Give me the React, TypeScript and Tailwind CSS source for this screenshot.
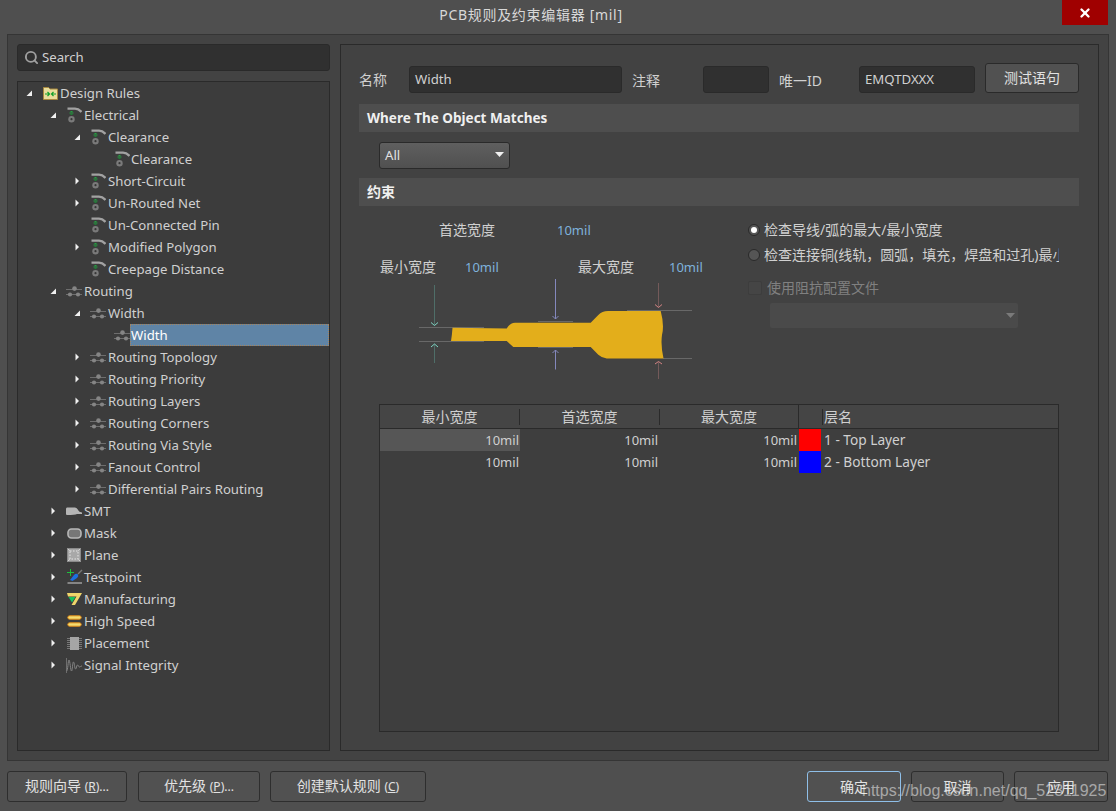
import { Search, X } from 'lucide-react';

type IconName =
  | 'folder' | 'rule' | 'route' | 'smt' | 'mask' | 'plane'
  | 'testpoint' | 'manufacturing' | 'speed' | 'placement' | 'signal';

interface TreeItem {
  label: string;
  level: number;
  icon: IconName;
  arrow?: 'open' | 'closed';
  selected?: boolean;
}

const treeItems: TreeItem[] = [
  { label: 'Design Rules', level: 0, icon: 'folder', arrow: 'open' },
  { label: 'Electrical', level: 1, icon: 'rule', arrow: 'open' },
  { label: 'Clearance', level: 2, icon: 'rule', arrow: 'open' },
  { label: 'Clearance', level: 3, icon: 'rule' },
  { label: 'Short-Circuit', level: 2, icon: 'rule', arrow: 'closed' },
  { label: 'Un-Routed Net', level: 2, icon: 'rule', arrow: 'closed' },
  { label: 'Un-Connected Pin', level: 2, icon: 'rule' },
  { label: 'Modified Polygon', level: 2, icon: 'rule', arrow: 'closed' },
  { label: 'Creepage Distance', level: 2, icon: 'rule' },
  { label: 'Routing', level: 1, icon: 'route', arrow: 'open' },
  { label: 'Width', level: 2, icon: 'route', arrow: 'open' },
  { label: 'Width', level: 3, icon: 'route', selected: true },
  { label: 'Routing Topology', level: 2, icon: 'route', arrow: 'closed' },
  { label: 'Routing Priority', level: 2, icon: 'route', arrow: 'closed' },
  { label: 'Routing Layers', level: 2, icon: 'route', arrow: 'closed' },
  { label: 'Routing Corners', level: 2, icon: 'route', arrow: 'closed' },
  { label: 'Routing Via Style', level: 2, icon: 'route', arrow: 'closed' },
  { label: 'Fanout Control', level: 2, icon: 'route', arrow: 'closed' },
  { label: 'Differential Pairs Routing', level: 2, icon: 'route', arrow: 'closed' },
  { label: 'SMT', level: 1, icon: 'smt', arrow: 'closed' },
  { label: 'Mask', level: 1, icon: 'mask', arrow: 'closed' },
  { label: 'Plane', level: 1, icon: 'plane', arrow: 'closed' },
  { label: 'Testpoint', level: 1, icon: 'testpoint', arrow: 'closed' },
  { label: 'Manufacturing', level: 1, icon: 'manufacturing', arrow: 'closed' },
  { label: 'High Speed', level: 1, icon: 'speed', arrow: 'closed' },
  { label: 'Placement', level: 1, icon: 'placement', arrow: 'closed' },
  { label: 'Signal Integrity', level: 1, icon: 'signal', arrow: 'closed' },
];

const levelPadding = ['pl-[8px]', 'pl-[32px]', 'pl-[56px]', 'pl-[80px]'];

function TreeIcon({ name }: { name: IconName }) {
  switch (name) {
    case 'folder':
      return (
        <svg width="15" height="14" viewBox="0 0 15 14" className="shrink-0">
          <path d="M0.5 1.5H5.5L7 3H14.5V13.5H0.5Z" fill="#e9dd9c" stroke="#a8893f" />
          <path d="M2 8H6M4.5 6L6.5 8L4.5 10M13 8H9M10.5 6L8.5 8L10.5 10" stroke="#12a12c" strokeWidth="1.2" fill="none" />
        </svg>
      );
    case 'rule':
      return (
        <svg width="15" height="16" viewBox="0 0 15 16" className="shrink-0">
          <path d="M0.5 1.6H8Q11.5 1.6 14.5 5" stroke="#a2a2a2" strokeWidth="2.4" fill="none" />
          <rect x="3.5" y="4" width="2" height="1" fill="#22a540" />
          <rect x="2.5" y="5.5" width="4" height="1" fill="#22a540" />
          <rect x="3.5" y="7" width="2" height="1" fill="#1b7f33" />
          <circle cx="4.5" cy="12.2" r="3.2" fill="#7a7a7a" />
          <circle cx="4.5" cy="12.2" r="1.1" fill="#363636" />
        </svg>
      );
    case 'route':
      return (
        <svg width="16" height="11" viewBox="0 0 16 11" className="-ml-[1px] shrink-0">
          <path d="M0 3.5H16M0 8.5H16" stroke="#6e6e6e" />
          <circle cx="8.5" cy="2.6" r="2.3" fill="#858585" />
          <circle cx="4" cy="8.5" r="2.1" fill="#858585" />
          <circle cx="12" cy="8.5" r="2.1" fill="#858585" />
        </svg>
      );
    case 'smt':
      return (
        <svg width="16" height="9" viewBox="0 0 16 9" className="-ml-[1px] shrink-0">
          <path d="M1 0.5H9Q11 0.5 12 3Q13 5 16 5.5V7H11Q9 8 1 8Q0 8 0 7V2Q0 0.5 1 0.5Z" fill="#b5b5b5" />
        </svg>
      );
    case 'mask':
      return (
        <svg width="15" height="11" viewBox="0 0 15 11" className="shrink-0">
          <rect x="1" y="1" width="13" height="9" rx="3.5" fill="#777" stroke="#b8b8b8" strokeWidth="1.6" />
        </svg>
      );
    case 'plane':
      return (
        <svg width="14" height="14" viewBox="0 0 14 14" className="shrink-0">
          <rect width="14" height="14" fill="#a8a8a8" />
          <rect x="3" y="3" width="8" height="8" fill="none" stroke="#e4e4e4" strokeDasharray="1.5 1.5" />
          <path d="M0.5 0.5H13.5V13.5H0.5Z" fill="none" stroke="#8a8a8a" />
          <path d="M1 1L3 3M13 1L11 3M1 13L3 11M13 13L11 11" stroke="#e4e4e4" strokeDasharray="1 1" />
        </svg>
      );
    case 'testpoint':
      return (
        <svg width="16" height="15" viewBox="0 0 16 15" className="-mt-[1px] shrink-0">
          <path d="M0 3.5H7M3.5 0V7" stroke="#1ec03c" />
          <path d="M3 11L7 6Q9 4 11 5.5Q12 7 10 9L5.5 12Z" fill="#1c6fe0" />
          <path d="M11 5L15 1" stroke="#777" strokeWidth="1.4" />
          <path d="M0.5 14H15" stroke="#cfcfcf" />
        </svg>
      );
    case 'manufacturing':
      return (
        <svg width="15" height="12" viewBox="0 0 15 12" className="shrink-0">
          <path d="M0 0H15L8 12H4.5L9.5 3.5H1Z" fill="#efd56a" />
          <path d="M1.5 4H8.5L5 9.5Z" fill="#17c25d" />
        </svg>
      );
    case 'speed':
      return (
        <svg width="15" height="12" viewBox="0 0 15 12" className="shrink-0">
          <rect x="0.8" y="0.8" width="13.4" height="3.4" rx="1.7" fill="#f3dc72" stroke="#e08a16" />
          <rect x="0.8" y="7.8" width="13.4" height="3.4" rx="1.7" fill="#f3dc72" stroke="#e08a16" />
        </svg>
      );
    case 'placement':
      return (
        <svg width="15" height="13" viewBox="0 0 15 13" className="shrink-0">
          <rect x="3" y="0" width="9" height="13" fill="#a5a5a5" />
          <path d="M0 1.5H3M0 3.5H3M0 5.5H3M0 7.5H3M0 9.5H3M0 11.5H3M12 1.5H15M12 3.5H15M12 5.5H15M12 7.5H15M12 9.5H15M12 11.5H15" stroke="#777" />
        </svg>
      );
    case 'signal':
      return (
        <svg width="16" height="15" viewBox="0 0 16 15" className="-ml-[1px] shrink-0">
          <path d="M0.5 0V15" stroke="#6e6e6e" />
          <path d="M0.5 13C2 13 2 2 3 2S4.5 13 5.5 13S6.5 4 7.5 4S8.5 11 9.5 11S10.5 7 11.5 7S12.5 9 13.5 9S14.5 8 16 8" stroke="#858585" fill="none" />
        </svg>
      );
  }
}

function TreeArrow({ kind }: { kind?: 'open' | 'closed' }) {
  if (kind === 'open') {
    return (
      <svg width="7" height="7" viewBox="0 0 7 7">
        <path d="M6 0.5V6H0.5Z" fill="#f0f0f0" />
      </svg>
    );
  }
  if (kind === 'closed') {
    return (
      <svg width="7" height="8" viewBox="0 0 7 8">
        <path d="M1.5 0.5L5 4L1.5 7.5Z" fill="#f0f0f0" />
      </svg>
    );
  }
  return null;
}

function TreeRow({ item }: { item: TreeItem }) {
  return (
    <div className={`flex h-[22px] items-center text-[13.2px] ${levelPadding[item.level]}`}>
      <span className="flex w-[17px] shrink-0 items-center"><TreeArrow kind={item.arrow} /></span>
      <span className="flex w-[15px] shrink-0 items-center justify-start"><TreeIcon name={item.icon} /></span>
      {item.selected ? (
        <span className="flex h-[22px] flex-1 items-center border border-dotted border-[#a8835a] bg-[#5f84a6] text-white">{item.label}</span>
      ) : (
        <span className={`text-[#d0d0d0] ${item.level === 3 ? 'ml-[1px]' : 'ml-[2px]'}`}>{item.label}</span>
      )}
    </div>
  );
}

function WidthDiagram() {
  return (
    <svg width="273" height="102" viewBox="419 278 273 102" className="ml-[60px] mt-px block">
      <path d="M419 327.5H484M419 341.5H484M538 321.5H573M538 347.5H573M627 310.5H692M663 358.5H692" stroke="#686868" />
      <path
        d="M452.5 327.8L506.7 328.5Q510 322.8 515 322.7H590.7L598.3 315Q602 311 608 311H660.7Q664.5 325 662 335Q660.5 345 663.5 358.5H606.7Q602 358 598.3 354.7L590.7 347H513.3L506.7 341H451Q452 335 452.5 327.8Z"
        fill="#e3ae1b"
      />
      <path d="M434.5 285V325M434.5 344V363" stroke="#4f6e68" />
      <path d="M431 322.5L434.5 325.5L438 322.5M431 347L434.5 344L438 347" stroke="#7fd6c4" fill="none" />
      <path d="M555.5 279V319M555.5 350V369.5" stroke="#8488bd" />
      <path d="M552.5 316L555.5 319L558.5 316M552.5 353L555.5 350L558.5 353" stroke="#8488bd" fill="none" />
      <path d="M658.5 283V307M658.5 362V379" stroke="#745a5a" />
      <path d="M655 304.5L658.5 307.5L662 304.5M655 364L658.5 361.5L662 364" stroke="#d58484" fill="none" />
    </svg>
  );
}

function ToolButton({ label, className }: { label: React.ReactNode; className: string }) {
  return (
    <button className={`flex h-[31px] items-center justify-center rounded-[3px] border border-[#2e2e2e] bg-[#515151] text-[#e2e2e2] ${className}`}>
      {label}
    </button>
  );
}

function SectionHeader({ title, className }: { title: string; className: string }) {
  return (
    <div className={`flex h-[28px] items-center bg-[#4e4e4e] pl-[8px] text-[14px] font-bold text-[#f0f0f0] ${className}`}>{title}</div>
  );
}

const layerRows = [
  { name: '1 - Top Layer', color: 'bg-[#ff0000]', active: true },
  { name: '2 - Bottom Layer', color: 'bg-[#0000ff]', active: false },
];

export default function App() {
  return (
    <div className="relative flex h-[811px] w-[1116px] flex-col overflow-hidden bg-[#4f4f4f] text-[14px] leading-[20px] [font-family:'Noto_Sans','Noto_Sans_CJK_SC',sans-serif]">
      <div className="flex h-[34px] shrink-0 pr-[8px]">
        <div className="flex-1 pt-[5px] text-center tracking-[0.7px] text-[#d8d8d8]">PCB规则及约束编辑器 [mil]</div>
        <div className="flex h-[25px] w-[46px] items-center justify-center bg-[#a00000]">
          <X size={14} strokeWidth={4} className="text-white" />
        </div>
      </div>

      <div className="mx-[7px] flex h-[727px] shrink-0 gap-[10px] border border-[#353535] bg-[#434343] p-[9px]">
        {/* left side: search and rule tree */}
        <div className="flex w-[313px] shrink-0 flex-col gap-[10px]">
          <div className="flex h-[27px] items-center gap-[3px] rounded-[3px] border border-[#2a2a2a] bg-[#303030] pb-[1px] pl-[6px] text-[13.2px] text-[#d0d0d0]">
            <Search size={15} strokeWidth={3} className="text-[#a0a0a0]" />
            <span>Search</span>
          </div>
          <div className="flex-1 border border-[#2a2a2a] bg-[#3c3c3c]">
            {treeItems.map((item, i) => (
              <TreeRow key={i} item={item} />
            ))}
          </div>
        </div>

        {/* right side: rule editor */}
        <div className="flex flex-1 flex-col border border-[#2a2a2a] bg-[#424242] pl-[18px] pr-[19px] pt-[18px]">
          <div className="flex h-[30px] items-end text-[#d0d0d0]">
            <span className="w-[50px] pb-[3px]">名称</span>
            <div className="flex h-[27px] w-[213px] items-center rounded-[3px] border border-[#2a2a2a] bg-[#303030] pb-[2px] pl-[5px] text-[13.2px]">Width</div>
            <span className="ml-[10px] w-[71px] pb-[2px]">注释</span>
            <div className="h-[27px] w-[66px] rounded-[3px] border border-[#2a2a2a] bg-[#303030]" />
            <span className="ml-[10px] w-[80px] pb-[2px]">唯一ID</span>
            <div className="flex h-[27px] w-[116px] items-center rounded-[3px] border border-[#2a2a2a] bg-[#303030] pb-[2px] pl-[5px] text-[13.2px]">EMQTDXXX</div>
            <div className="ml-[10px] flex h-[30px] w-[94px] items-center justify-center rounded-[3px] border border-[#2a2a2a] bg-[#515151] text-[#e2e2e2]">测试语句</div>
          </div>

          <SectionHeader title="Where The Object Matches" className="mt-[11px] !text-[13.5px]" />
          <div className="ml-[20px] mt-[10px] flex h-[27px] w-[131px] items-center justify-between rounded-[3px] border border-[#2a2a2a] bg-gradient-to-b from-[#5f5f5f] to-[#505050] px-[5px] pb-[2px] text-[13.2px] text-[#e2e2e2]">
            <span>All</span>
            <svg width="9" height="5" viewBox="0 0 9 5"><path d="M0 0H9L4.5 5Z" fill="#f0f0f0" /></svg>
          </div>
          <SectionHeader title="约束" className="mt-[9px]" />

          <div className="flex h-[198px] shrink-0">
            <div className="w-[389px] shrink-0">
              <div className="mt-[14px] flex pl-[80px]">
                <span className="w-[118px] text-[#d0d0d0]">首选宽度</span>
                <span className="text-[13px] text-[#7fb2dc]">10mil</span>
              </div>
              <div className="mt-[17px] flex pl-[21px]">
                <span className="w-[85px] text-[#d0d0d0]">最小宽度</span>
                <span className="w-[113px] text-[13px] text-[#7fb2dc]">10mil</span>
                <span className="w-[91px] text-[#d0d0d0]">最大宽度</span>
                <span className="text-[13px] text-[#7fb2dc]">10mil</span>
              </div>
              <WidthDiagram />
            </div>

            <div className="w-[311px] overflow-hidden pt-[14px] text-[#d0d0d0]">
              <div className="flex h-[20px] items-center gap-[4px] whitespace-nowrap">
                <span className="flex h-[12px] w-[12px] shrink-0 items-center justify-center rounded-full border border-[#2a2a2a] bg-[#555]">
                  <span className="h-[6px] w-[6px] rounded-full bg-white" />
                </span>
                检查导线/弧的最大/最小宽度
              </div>
              <div className="mt-[5px] flex h-[20px] items-center gap-[4px] whitespace-nowrap">
                <span className="h-[12px] w-[12px] shrink-0 rounded-full border border-[#2a2a2a] bg-[#555]" />
                检查连接铜(线轨，圆弧，填充，焊盘和过孔)最小宽度
              </div>
              <div className="mt-[13px] flex h-[20px] items-center gap-[5px] whitespace-nowrap text-[#808080]">
                <span className="h-[14px] w-[14px] shrink-0 rounded-[2px] border border-[#3d3d3d] bg-[#454545]" />
                使用阻抗配置文件
              </div>
              <div className="ml-[22px] mt-[5px] flex h-[25px] w-[248px] items-center justify-end rounded-[2px] bg-[#4a4a4a] pr-[3px]">
                <svg width="9" height="5" viewBox="0 0 9 5"><path d="M0 0H9L4.5 5Z" fill="#7a7a7a" /></svg>
              </div>
            </div>
          </div>

          <div className="mx-[20px] h-[328px] border border-[#2a2a2a] bg-[#3e3e3e] text-[#d0d0d0]">
            <div className="flex h-[24px] border-b border-[#2a2a2a] bg-[#454545]">
              <div className="flex w-[140px] items-center justify-center"><span className="flex-1 text-center">最小宽度</span><span className="h-[16px] border-l border-[#2a2a2a]" /></div>
              <div className="flex w-[140px] items-center justify-center"><span className="flex-1 text-center">首选宽度</span><span className="h-[16px] border-l border-[#2a2a2a]" /></div>
              <div className="flex w-[139px] items-center justify-center"><span className="flex-1 text-center">最大宽度</span><span className="h-[24px] border-l border-[#2a2a2a]" /></div>
              <div className="flex w-[24px] items-center justify-end"><span className="h-[16px] border-l border-[#2a2a2a]" /></div>
              <div className="flex items-center pl-[1px]">层名</div>
            </div>
            {layerRows.map((row) => (
              <div key={row.name} className="flex h-[22px] items-center text-[13px]">
                <div className={`flex h-[22px] w-[140px] items-center justify-end pr-[1px] ${row.active ? 'bg-[#565656]' : ''}`}>10mil</div>
                <div className="w-[140px] pr-[2px] text-right">10mil</div>
                <div className="w-[139px] pr-[2px] text-right">10mil</div>
                <div className={`h-[22px] w-[22px] ${row.color}`} />
                <div className="pl-[3px] text-[13.7px]">{row.name}</div>
              </div>
            ))}
          </div>
        </div>
      </div>

      <div className="flex flex-1 pl-[7px] pr-[8px] pt-[10px]">
        <ToolButton className="w-[120px]" label={<span>规则向导 <span className="text-[12px]">(<u>R</u>)...</span></span>} />
        <ToolButton className="ml-[11px] w-[122px]" label={<span>优先级 <span className="text-[12px]">(<u>P</u>)...</span></span>} />
        <ToolButton className="ml-[10px] w-[156px]" label={<span>创建默认规则 <span className="text-[12px]">(<u>C</u>)</span></span>} />
        <ToolButton className="ml-auto w-[94px] !border-[#8fbfe8]" label="确定" />
        <ToolButton className="ml-[10px] w-[93px]" label="取消" />
        <ToolButton className="ml-[10px] w-[94px]" label="应用" />
      </div>

      {/* blog watermark printed over the screenshot */}
      <div className="absolute left-[862px] top-[781px] text-[16px] text-white/50 [font-family:'Liberation_Sans',sans-serif]">https://blog.csdn.net/qq_52311925</div>
    </div>
  );
}
